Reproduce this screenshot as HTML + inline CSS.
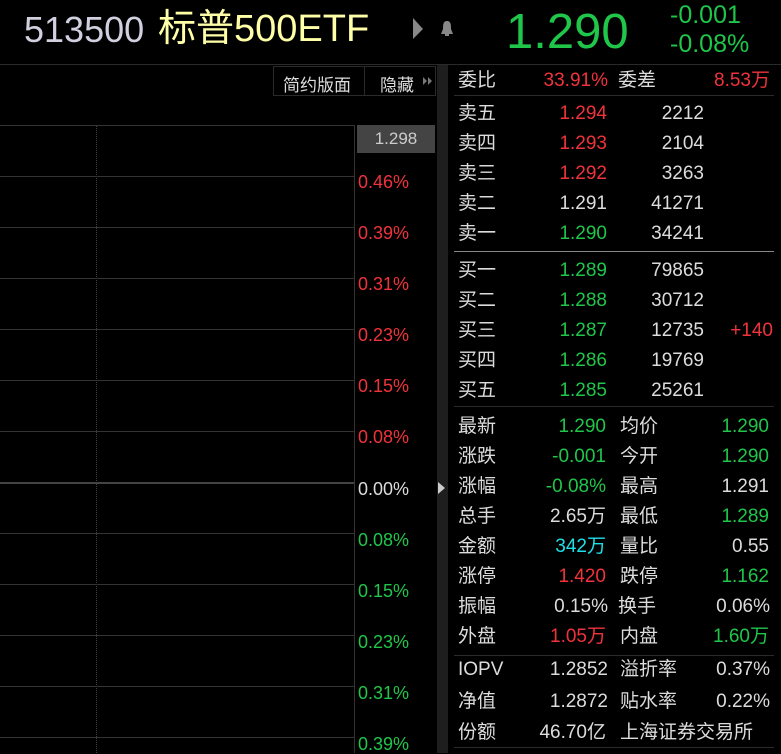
<!DOCTYPE html>
<html><head><meta charset="utf-8"><style>
*{margin:0;padding:0;box-sizing:border-box}
body{width:781px;height:753px;background:#000;overflow:hidden;position:relative;font-family:"Liberation Sans","Noto Sans CJK SC",sans-serif;color:#dcdcdc}
.a{position:absolute;white-space:nowrap}
.r{color:#f0333b}.g{color:#1fc64a}.w{color:#dcdcdc}.c{color:#1de0e8}
.hl{position:absolute;left:0;width:354px;height:1px;background:#333}
.lb{position:absolute;left:358px;font-size:18px;line-height:20px}
.p{font-size:19px;line-height:24px;margin-top:2px}
.t{text-align:right}
</style></head><body>
<!-- header -->
<div class="a" style="left:24px;top:8px;font-size:36px;line-height:44px;color:#d0d0e0">513500</div>
<div class="a" style="left:158px;top:6px;font-size:38px;line-height:46px;color:#ffffa8">标普500ETF</div>
<svg class="a" style="left:412px;top:18px" width="12" height="22"><polygon points="1,0 11,11 1,21" fill="#888"/></svg>
<svg class="a" style="left:440px;top:20px" width="14" height="18"><path d="M7 1 C3 1 3 5 3 9 L1 14 L13 14 L11 9 C11 5 11 1 7 1Z" fill="#888"/><rect x="5" y="14" width="4" height="2" fill="#888"/></svg>
<div class="a g" style="left:506px;top:3px;font-size:49px;line-height:58px">1.290</div>
<div class="a g" style="left:670px;top:1px;font-size:25px;line-height:28px">-0.001</div>
<div class="a g" style="left:670px;top:30px;font-size:25px;line-height:28px">-0.08%</div>
<div class="a" style="left:0;top:64px;width:781px;height:1px;background:#2a2a2a"></div>
<!-- buttons -->
<div class="a" style="left:273px;top:66px;width:163px;height:30px;border:1px solid #2a2a2a"></div>
<div class="a" style="left:364px;top:66px;width:1px;height:30px;background:#2a2a2a"></div>
<div class="a" style="left:283px;top:71px;font-size:17px;color:#ddd">简约版面</div>
<div class="a" style="left:380px;top:71px;font-size:17px;color:#ddd">隐藏</div>
<svg class="a" style="left:423px;top:77px" width="10" height="8"><polygon points="0,0 4,4 0,8" fill="#777"/><polygon points="5,0 9,4 5,8" fill="#777"/></svg>
<!-- divider strip -->
<div class="a" style="left:437px;top:65px;width:11px;height:688px;background:#1e1e1e"></div>
<svg class="a" style="left:438px;top:482px" width="8" height="12"><polygon points="0,0 7,6 0,12" fill="#ccc"/></svg>
<!-- chart -->
<div class="a" style="left:354px;top:125px;width:1px;height:628px;background:#333"></div>
<div class="a" style="left:96px;top:125px;width:0;height:628px;border-left:1px dotted #444"></div>
<div class="hl" style="top:125px"></div>
<div class="hl" style="top:176px"></div>
<div class="hl" style="top:227px"></div>
<div class="hl" style="top:278px"></div>
<div class="hl" style="top:329px"></div>
<div class="hl" style="top:380px"></div>
<div class="hl" style="top:431px"></div>
<div class="hl" style="top:482px;height:2px;background:#444"></div>
<div class="hl" style="top:533px"></div>
<div class="hl" style="top:584px"></div>
<div class="hl" style="top:635px"></div>
<div class="hl" style="top:686px"></div>
<div class="hl" style="top:737px"></div>
<div class="a" style="left:357px;top:125px;width:78px;height:28px;background:#444;color:#ccc;font-size:17px;line-height:28px;text-align:center">1.298</div>
<div class="lb r" style="top:172px">0.46%</div>
<div class="lb r" style="top:223px">0.39%</div>
<div class="lb r" style="top:274px">0.31%</div>
<div class="lb r" style="top:325px">0.23%</div>
<div class="lb r" style="top:376px">0.15%</div>
<div class="lb r" style="top:427px">0.08%</div>
<div class="lb w" style="top:479px">0.00%</div>
<div class="lb g" style="top:530px">0.08%</div>
<div class="lb g" style="top:581px">0.15%</div>
<div class="lb g" style="top:632px">0.23%</div>
<div class="lb g" style="top:683px">0.31%</div>
<div class="lb g" style="top:734px">0.39%</div>
<!-- right panel -->
<div class="a" style="left:454px;top:95px;width:320px;height:1px;background:#2a2a2a"></div>
<div class="a" style="left:454px;top:251px;width:320px;height:1px;background:#888"></div>
<div class="a" style="left:454px;top:406px;width:320px;height:1px;background:#2a2a2a"></div>
<div class="a" style="left:454px;top:655px;width:320px;height:1px;background:#2a2a2a"></div>
<div class="a" style="left:454px;top:747px;width:320px;height:1px;background:#2a2a2a"></div>

<div class="a p" style="left:458px;top:67px">委比</div>
<div class="a p r t" style="left:520px;top:67px;width:88px">33.91%</div>
<div class="a p" style="left:618px;top:67px">委差</div>
<div class="a p r t" style="left:680px;top:67px;width:90px">8.53万</div>

<div class="a p" style="left:458px;top:100px">卖五</div><div class="a p r t" style="left:530px;top:100px;width:77px">1.294</div><div class="a p t" style="left:620px;top:100px;width:84px">2212</div>
<div class="a p" style="left:458px;top:130px">卖四</div><div class="a p r t" style="left:530px;top:130px;width:77px">1.293</div><div class="a p t" style="left:620px;top:130px;width:84px">2104</div>
<div class="a p" style="left:458px;top:160px">卖三</div><div class="a p r t" style="left:530px;top:160px;width:77px">1.292</div><div class="a p t" style="left:620px;top:160px;width:84px">3263</div>
<div class="a p" style="left:458px;top:190px">卖二</div><div class="a p w t" style="left:530px;top:190px;width:77px">1.291</div><div class="a p t" style="left:620px;top:190px;width:84px">41271</div>
<div class="a p" style="left:458px;top:220px">卖一</div><div class="a p g t" style="left:530px;top:220px;width:77px">1.290</div><div class="a p t" style="left:620px;top:220px;width:84px">34241</div>

<div class="a p" style="left:458px;top:257px">买一</div><div class="a p g t" style="left:530px;top:257px;width:77px">1.289</div><div class="a p t" style="left:620px;top:257px;width:84px">79865</div>
<div class="a p" style="left:458px;top:287px">买二</div><div class="a p g t" style="left:530px;top:287px;width:77px">1.288</div><div class="a p t" style="left:620px;top:287px;width:84px">30712</div>
<div class="a p" style="left:458px;top:317px">买三</div><div class="a p g t" style="left:530px;top:317px;width:77px">1.287</div><div class="a p t" style="left:620px;top:317px;width:84px">12735</div><div class="a p r t" style="left:700px;top:317px;width:73px">+140</div>
<div class="a p" style="left:458px;top:347px">买四</div><div class="a p g t" style="left:530px;top:347px;width:77px">1.286</div><div class="a p t" style="left:620px;top:347px;width:84px">19769</div>
<div class="a p" style="left:458px;top:377px">买五</div><div class="a p g t" style="left:530px;top:377px;width:77px">1.285</div><div class="a p t" style="left:620px;top:377px;width:84px">25261</div>

<div class="a p" style="left:458px;top:413px">最新</div><div class="a p g t" style="left:520px;top:413px;width:86px">1.290</div><div class="a p" style="left:620px;top:413px">均价</div><div class="a p g t" style="left:680px;top:413px;width:89px">1.290</div>
<div class="a p" style="left:458px;top:443px">涨跌</div><div class="a p g t" style="left:520px;top:443px;width:86px">-0.001</div><div class="a p" style="left:620px;top:443px">今开</div><div class="a p g t" style="left:680px;top:443px;width:89px">1.290</div>
<div class="a p" style="left:458px;top:473px">涨幅</div><div class="a p g t" style="left:520px;top:473px;width:86px">-0.08%</div><div class="a p" style="left:620px;top:473px">最高</div><div class="a p w t" style="left:680px;top:473px;width:89px">1.291</div>
<div class="a p" style="left:458px;top:503px">总手</div><div class="a p w t" style="left:520px;top:503px;width:86px">2.65万</div><div class="a p" style="left:620px;top:503px">最低</div><div class="a p g t" style="left:680px;top:503px;width:89px">1.289</div>
<div class="a p" style="left:458px;top:533px">金额</div><div class="a p c t" style="left:520px;top:533px;width:86px">342万</div><div class="a p" style="left:620px;top:533px">量比</div><div class="a p w t" style="left:680px;top:533px;width:89px">0.55</div>
<div class="a p" style="left:458px;top:563px">涨停</div><div class="a p r t" style="left:520px;top:563px;width:86px">1.420</div><div class="a p" style="left:620px;top:563px">跌停</div><div class="a p g t" style="left:680px;top:563px;width:89px">1.162</div>
<div class="a p" style="left:458px;top:593px">振幅</div><div class="a p w t" style="left:520px;top:593px;width:88px">0.15%</div><div class="a p" style="left:618px;top:593px">换手</div><div class="a p w t" style="left:680px;top:593px;width:90px">0.06%</div>
<div class="a p" style="left:458px;top:623px">外盘</div><div class="a p r t" style="left:520px;top:623px;width:86px">1.05万</div><div class="a p" style="left:620px;top:623px">内盘</div><div class="a p g t" style="left:680px;top:623px;width:89px">1.60万</div>

<div class="a p" style="left:458px;top:656px">IOPV</div><div class="a p w t" style="left:520px;top:656px;width:88px">1.2852</div><div class="a p" style="left:620px;top:656px">溢折率</div><div class="a p w t" style="left:680px;top:656px;width:90px">0.37%</div>
<div class="a p" style="left:458px;top:688px">净值</div><div class="a p w t" style="left:520px;top:688px;width:88px">1.2872</div><div class="a p" style="left:620px;top:688px">贴水率</div><div class="a p w t" style="left:680px;top:688px;width:90px">0.22%</div>
<div class="a p" style="left:458px;top:719px">份额</div><div class="a p w t" style="left:520px;top:719px;width:86px">46.70亿</div><div class="a p" style="left:620px;top:719px">上海证券交易所</div>
</body></html>
